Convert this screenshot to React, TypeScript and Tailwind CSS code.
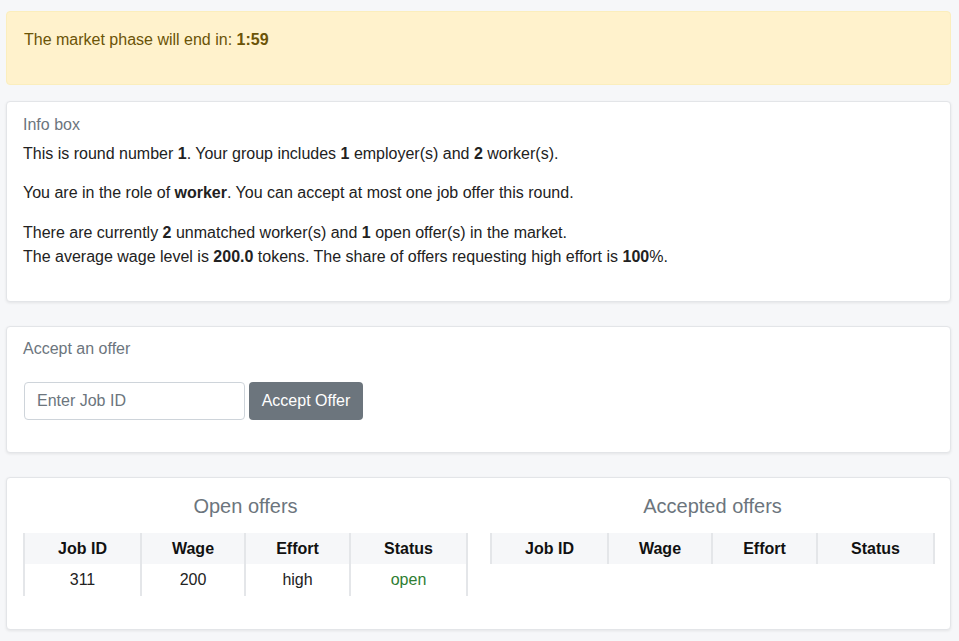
const cols = ["Job ID", "Wage", "Effort", "Status"];
const widths = ["w-[117px]", "w-[104px]", "w-[105px]", "w-[117px]"];

type Offer = { id: number; wage: number; effort: string; status: string };

const OfferTable = ({ title, rows }: { title: string; rows: Offer[] }) => (
  <div className="flex flex-col">
    <div className="text-center text-[20px] leading-[30px] text-[#6c757d] mt-[13px] mb-[12px]">
      {title}
    </div>
    <table className="border-collapse table-fixed w-[443px] text-[16px]">
      <thead>
        <tr className="bg-[#f6f7f9]">
          {cols.map((c, i) => (
            <th
              key={c}
              className={`${widths[i]} h-[31px] font-bold text-[#111] border-x-2 border-[#e4e6e9] text-center`}
            >
              {c}
            </th>
          ))}
        </tr>
      </thead>
      <tbody>
        {rows.map((r) => (
          <tr key={r.id}>
            <td className="h-[32px] border-x-2 border-[#e4e6e9] text-center text-[#222]">{r.id}</td>
            <td className="border-x-2 border-[#e4e6e9] text-center text-[#222]">{r.wage}</td>
            <td className="border-x-2 border-[#e4e6e9] text-center text-[#222]">{r.effort}</td>
            <td className="border-x-2 border-[#e4e6e9] text-center text-[#2e7d32]">{r.status}</td>
          </tr>
        ))}
      </tbody>
    </table>
  </div>
);

export default function App() {
  const card =
    "bg-white rounded-[4px] border border-[#e3e5e8] shadow-[0_1px_3px_rgba(0,0,0,0.08)]";

  return (
    <div
      className="min-h-[641px] bg-[#f6f7f9] pl-[6px] pr-[8px] pt-[11px] pb-[12px] text-[16px] text-[#222]"
      style={{ fontFamily: '"Liberation Sans", Arial, sans-serif' }}
    >
      <div className="h-[74px] rounded-[4px] bg-[#fff2cc] border border-[#fbeebd] px-[17px] pt-[16px] text-[#6b5407] leading-[24px]">
        The market phase will end in: <b>1:59</b>
      </div>

      <div className={`${card} mt-[16px] px-[16px] pt-[11px] pb-[16px] leading-[24px]`}>
        <div className="text-[#6c757d] mb-[5px]">Info box</div>
        <p>
          This is round number <b>1</b>. Your group includes <b>1</b> employer(s) and <b>2</b>{" "}
          worker(s).
        </p>
        <p className="mt-[15px]">
          You are in the role of <b>worker</b>. You can accept at most one job offer this round.
        </p>
        <p className="mt-[16px] mb-[16px]">
          There are currently <b>2</b> unmatched worker(s) and <b>1</b> open offer(s) in the market.
          <br />
          The average wage level is <b>200.0</b> tokens. The share of offers requesting high effort is{" "}
          <b>100</b>%.
        </p>
      </div>

      <div className={`${card} mt-[24px] px-[16px] pt-[10px] pb-[32px]`}>
        <div className="text-[#6c757d] leading-[24px]">Accept an offer</div>
        <div className="flex items-center gap-[4px] mt-[21px] pl-[1px]">
          <input
            placeholder="Enter Job ID"
            className="w-[221px] h-[38px] rounded-[4px] border border-[#ced4da] px-[12px] text-[16px] text-[#222] placeholder:text-[#6c757d] outline-none bg-white"
          />
          <button className="h-[38px] w-[114px] rounded-[4px] bg-[#6c757d] text-white text-[16px]">
            Accept Offer
          </button>
        </div>
      </div>

      <div className={`${card} mt-[24px] px-[16px] flex gap-[22px] h-[153px]`}>
        <OfferTable title="Open offers" rows={[{ id: 311, wage: 200, effort: "high", status: "open" }]} />
        <OfferTable title="Accepted offers" rows={[]} />
      </div>
    </div>
  );
}
